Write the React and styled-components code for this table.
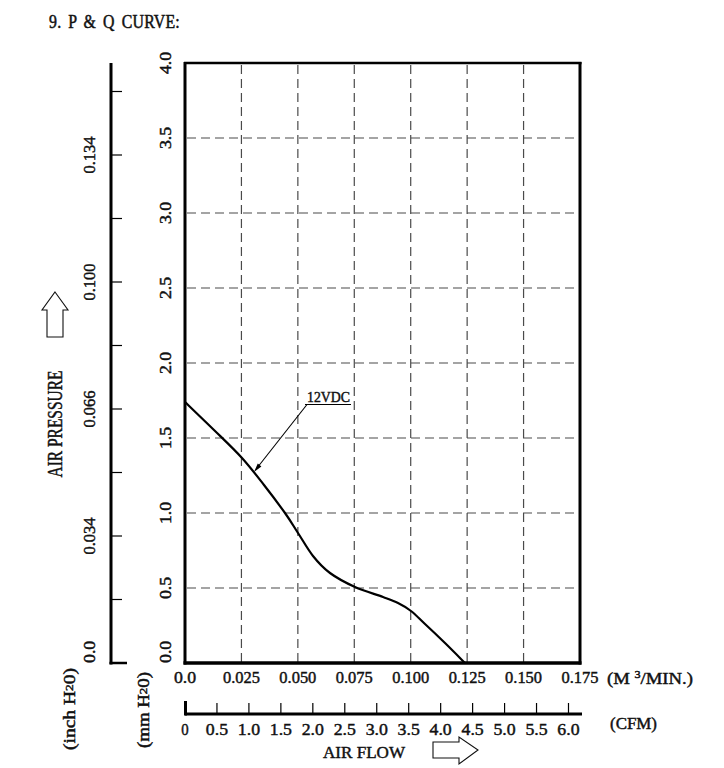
import React from "react";
import styled, { createGlobalStyle } from "styled-components";

// plot frame in page pixels
const X0 = 185;
const X1 = 580;
const Y0 = 663;
const Y1 = 63;
const TOP = 40; // height of the title strip above the chart
const CHAR_W = 7.4; // the datasheet font sets digits and points on a fixed pitch

const xAt = (q) => X0 + (q / 0.175) * (X1 - X0);
const yAt = (mm) => Y0 - mm * 150;

const flowLabels = ["0.0", "0.025", "0.050", "0.075", "0.100", "0.125", "0.150", "0.175"];
const mmLabels = ["0.0", "0.5", "1.0", "1.5", "2.0", "2.5", "3.0", "3.5", "4.0"];
const inchLabels = [
  { k: 2, v: "0.034" },
  { k: 4, v: "0.066" },
  { k: 6, v: "0.100" },
  { k: 8, v: "0.134" },
];
const INCH_STEP = 63.5;
const cfmValues = Array.from({ length: 13 }, (_, i) => i * 0.5);

// traced from the fan datasheet curve
const curvePoints = [
  [185, 402], [214, 430], [242, 458], [264, 485], [285, 513], [298, 533],
  [313, 556], [330, 573], [355, 587], [383, 597], [398, 603], [411, 611],
  [425, 624], [445, 643], [465, 663],
];

const smoothPath = (pts) => {
  let d = `M${pts[0][0]},${pts[0][1]}`;
  for (let i = 0; i < pts.length - 1; i++) {
    const p0 = pts[i - 1] || pts[i];
    const p1 = pts[i];
    const p2 = pts[i + 1];
    const p3 = pts[i + 2] || p2;
    const c1x = p1[0] + (p2[0] - p0[0]) / 6;
    const c1y = p1[1] + (p2[1] - p0[1]) / 6;
    const c2x = p2[0] - (p3[0] - p1[0]) / 6;
    const c2y = p2[1] - (p3[1] - p1[1]) / 6;
    d += ` C${c1x.toFixed(1)},${c1y.toFixed(1)} ${c2x.toFixed(1)},${c2y.toFixed(1)} ${p2[0]},${p2[1]}`;
  }
  return d;
};

const GlobalStyle = createGlobalStyle`
  html, body {
    margin: 0;
    padding: 0;
    background: #ffffff;
  }
`;

const Page = styled.div`
  width: 724px;
  height: 768px;
  overflow: hidden;
  background: #ffffff;
  font-family: "Liberation Serif", "Times New Roman", serif;
  color: #111;
`;

const Title = styled.h2`
  margin: 0;
  height: ${TOP}px;
  box-sizing: border-box;
  padding: 13px 0 0 49px;
  font-size: 18px;
  line-height: 18px;
  font-weight: normal;
  white-space: pre;
  word-spacing: 3px;
  letter-spacing: 0.3px;
`;

const TitleText = styled.span`
  display: inline-block;
  transform: scaleX(0.88);
  transform-origin: left center;
  -webkit-text-stroke: 0.5px #111;
`;

const Chart = styled.svg`
  display: block;
`;

const Label = styled.text`
  font-family: "Liberation Serif", "Times New Roman", serif;
  font-size: ${({ $size }) => $size || 16}px;
  fill: #111;
  stroke: #111;
  stroke-width: 0.45px;
`;

const Small = styled.tspan`
  font-size: 11px;
`;

const GridLine = styled.line`
  stroke: #4a4a4a;
  stroke-width: 1.2;
  stroke-dasharray: 9 5;
`;

const Rule = styled.line`
  stroke: #000;
  stroke-width: ${({ $w }) => $w || 1}px;
`;

const HollowArrow = styled.polygon`
  fill: #fff;
  stroke: #111;
  stroke-width: 1.1;
`;

const Curve = styled.path`
  fill: none;
  stroke: #000;
  stroke-width: 2.2;
  stroke-linejoin: round;
`;

// numeric tick label on the fixed pitch of the original sheet
const Num = ({ children, ...rest }) => (
  <Label $size={17} textLength={children.length * CHAR_W} lengthAdjust="spacingAndGlyphs" {...rest}>
    {children}
  </Label>
);

const App = () => {
  const tip = [254, 472];
  return (
    <Page>
      <GlobalStyle />
      <Title>
        <TitleText>9. P & Q CURVE:</TitleText>
      </Title>
      <Chart width="724" height={768 - TOP} viewBox={`0 ${TOP} 724 ${768 - TOP}`}>
        {/* grid */}
        {[1, 2, 3, 4, 5, 6].map((k) => (
          <GridLine key={`v${k}`} x1={xAt(k * 0.025)} y1={Y1 + 2} x2={xAt(k * 0.025)} y2={Y0} />
        ))}
        {[1, 2, 3, 4, 5, 6, 7].map((k) => (
          <GridLine key={`h${k}`} x1={X0 + 2} y1={yAt(k * 0.5)} x2={X1} y2={yAt(k * 0.5)} />
        ))}

        {/* frame */}
        <Rule $w={2.5} x1={X0 - 1} y1={Y1} x2={X1 + 1.5} y2={Y1} />
        <Rule $w={3} x1={X0} y1={Y1 - 1} x2={X0} y2={Y0 + 1.5} />
        <Rule $w={3} x1={X1} y1={Y1 - 1} x2={X1} y2={Y0 + 1.5} />
        <Rule $w={3.5} x1={X0 - 1.5} y1={Y0} x2={X1 + 1.5} y2={Y0} />

        {/* mm H2O scale */}
        {mmLabels.map((v, i) => (
          <Num
            key={v}
            transform={`translate(171 ${i === 0 ? Y0 : yAt(i * 0.5)}) rotate(-90)`}
            textAnchor={i === 0 ? "start" : "middle"}
          >
            {v}
          </Num>
        ))}

        {/* inch H2O scale */}
        <Rule $w={3} x1={111} y1={Y1} x2={111} y2={Y0 + 1.5} />
        <Rule $w={2.5} x1={109.5} y1={Y0} x2={127} y2={Y0} />
        {[1, 2, 3, 4, 5, 6, 7, 8, 9].map((k) => (
          <Rule key={k} $w={1.2} x1={111} y1={Y0 - k * INCH_STEP} x2={122} y2={Y0 - k * INCH_STEP} />
        ))}
        {inchLabels.map(({ k, v }) => (
          <Num key={v} transform={`translate(95 ${Y0 - k * INCH_STEP}) rotate(-90)`} textAnchor="middle">
            {v}
          </Num>
        ))}
        <Num transform={`translate(95 ${Y0}) rotate(-90)`} textAnchor="start">
          0.0
        </Num>

        <HollowArrow points="55,292 68,310 63,310 63,337 47,337 47,310 42,310" />
        <Label
          $size={20}
          transform="translate(62 424) rotate(-90)"
          textAnchor="middle"
          textLength="107"
          lengthAdjust="spacingAndGlyphs"
        >
          AIR PRESSURE
        </Label>
        <Label transform="translate(75 709) rotate(-90)" textAnchor="middle" textLength="82" lengthAdjust="spacingAndGlyphs">
          (inch H<Small dy="-2">2</Small>
          <tspan dy="2">0)</tspan>
        </Label>
        <Label transform="translate(149 710) rotate(-90)" textAnchor="middle" textLength="76" lengthAdjust="spacingAndGlyphs">
          (mm H<Small dy="-2">2</Small>
          <tspan dy="2">0)</tspan>
        </Label>

        {/* M3/MIN scale */}
        {flowLabels.map((v, i) => (
          <Num key={v} x={xAt(i * 0.025)} y={683} textAnchor="middle">
            {v}
          </Num>
        ))}
        <Label $size={17} x={607} y={684} textLength="86" lengthAdjust="spacingAndGlyphs">
          (M <Small dy="-6">3</Small>
          <tspan dy="6">/MIN.)</tspan>
        </Label>

        {/* CFM scale */}
        <Rule $w={3} x1={X0} y1={714} x2={582} y2={714} />
        <Rule $w={3} x1={X0 + 0.5} y1={701} x2={X0 + 0.5} y2={715.5} />
        {cfmValues.slice(1).map((c) => (
          <Rule key={c} $w={1.2} x1={xAt(c * 0.0283168)} y1={703} x2={xAt(c * 0.0283168)} y2={714} />
        ))}
        {cfmValues.map((c) => (
          <Num key={c} x={xAt(c * 0.0283168)} y={735} textAnchor="middle">
            {c === 0 ? "0" : c.toFixed(1)}
          </Num>
        ))}
        <Label $size={17} x={610} y={729} textLength="47" lengthAdjust="spacingAndGlyphs">
          (CFM)
        </Label>
        <Label $size={17} x={323} y={758} textLength="82" lengthAdjust="spacingAndGlyphs">
          AIR FLOW
        </Label>
        <HollowArrow points="433,742 459,742 459,737 478,750 459,764 459,758 433,758" />

        {/* P-Q curve with its callout */}
        <Curve d={smoothPath(curvePoints)} />
        <Rule $w={1.1} x1={307} y1={404.5} x2={tip[0] + 3} y2={tip[1] - 4} />
        <polygon points={`${tip[0]},${tip[1]} 261.4,466.4 257.8,463.6`} fill="#000" />
        <Rule $w={1.1} x1={305} y1={404.5} x2={351} y2={404.5} />
        <Label $size={15} x={307} y={402} textLength="43" lengthAdjust="spacingAndGlyphs">
          12VDC
        </Label>
      </Chart>
    </Page>
  );
};

export default App;
